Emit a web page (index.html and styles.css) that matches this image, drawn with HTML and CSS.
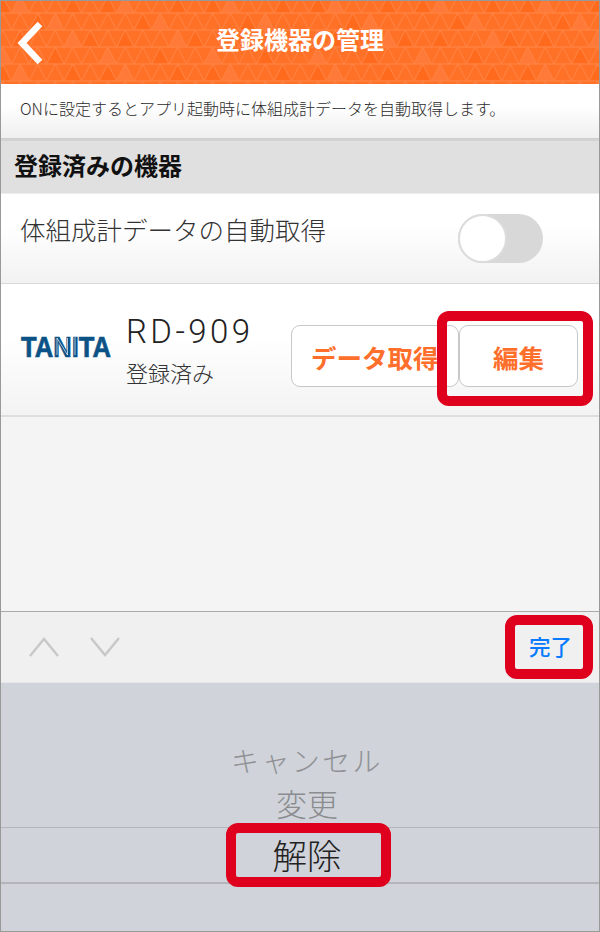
FILE: index.html
```html
<!DOCTYPE html>
<html lang="ja">
<head>
<meta charset="utf-8">
<title>登録機器の管理</title>
<link rel="stylesheet" href="styles.css">
</head>
<body>
<div class="screen">
  <header class="nav">
    <svg class="nav-pattern" width="598" height="83" aria-hidden="true">
      <defs>
        <pattern id="tri" width="105" height="68" patternUnits="userSpaceOnUse" x="-7" y="-5">
          <path d="M8.75 0 17.5 17H0Z M43.75 17 52.5 34H35Z M78.75 0 87.5 17H70Z M26.25 34 35 51H17.5Z M96.25 34 105 51H87.5Z M61.25 51 70 68H52.5Z" fill="#ff6a1c"/>
          <path d="M26.25 0 35 17H17.5Z M61.25 17 70 34H52.5Z M8.75 51 17.5 68H0Z M78.75 34 87.5 51H70Z" fill="#ff7a38"/>
          <path d="M0 17H105M0 34H105M0 51H105M0 0H105M0 68H105" stroke="#ff803f" stroke-width="1.5"/>
          <path d="M0 17 8.75 0 17.5 17 26.25 0 35 17 43.75 0 52.5 17 61.25 0 70 17 78.75 0 87.5 17 96.25 0 105 17" fill="none" stroke="#ff803f" stroke-width="1.2"/>
          <path d="M0 34 8.75 17 17.5 34 26.25 17 35 34 43.75 17 52.5 34 61.25 17 70 34 78.75 17 87.5 34 96.25 17 105 34" fill="none" stroke="#ff803f" stroke-width="1.2"/>
          <path d="M0 51 8.75 34 17.5 51 26.25 34 35 51 43.75 34 52.5 51 61.25 34 70 51 78.75 34 87.5 51 96.25 34 105 51" fill="none" stroke="#ff803f" stroke-width="1.2"/>
          <path d="M0 68 8.75 51 17.5 68 26.25 51 35 68 43.75 51 52.5 68 61.25 51 70 68 78.75 51 87.5 68 96.25 51 105 68" fill="none" stroke="#ff803f" stroke-width="1.2"/>
        </pattern>
      </defs>
      <rect width="598" height="83" fill="#ff7126"/>
      <rect width="598" height="83" fill="url(#tri)"/>
    </svg>
    <svg class="nav-back" width="28" height="44" viewBox="0 0 28 44" aria-hidden="true">
      <path d="M23 3 5 22 23 41" fill="none" stroke="#fff" stroke-width="6.5"/>
    </svg>
    <h1 class="nav-title">登録機器の管理</h1>
  </header>

  <p class="intro">ONに設定するとアプリ起動時に体組成計データを自動取得します。</p>

  <h2 class="section">登録済みの機器</h2>

  <div class="row-auto">
    <span class="row-auto-label">体組成計データの自動取得</span>
    <span class="toggle"><span class="toggle-knob"></span></span>
  </div>

  <div class="row-device">
    <svg class="logo" width="92" height="30" viewBox="0 0 92 30" role="img" aria-label="TANITA">
      <text class="logo-text" x="1" y="26" textLength="90" lengthAdjust="spacingAndGlyphs">TANITA</text>
      <path class="logo-inline" d="M37 24V7L47.5 24V7M55 6V24"/>
    </svg>
    <div class="device-info">
      <div class="device-name">RD-909</div>
      <div class="device-status">登録済み</div>
    </div>
    <div class="device-actions">
      <span class="btn btn-data">データ取得</span>
      <span class="btn btn-edit">編集</span>
    </div>
    <span class="mark mark-edit"></span>
  </div>

  <div class="blank"></div>

  <div class="toolbar">
    <div class="arrows">
      <svg width="32" height="22" viewBox="0 0 32 22" aria-hidden="true"><path d="M2 20 16 3 30 20" fill="none" stroke="#c8c8c8" stroke-width="2.4"/></svg>
      <svg width="32" height="22" viewBox="0 0 32 22" aria-hidden="true"><path d="M2 2 16 19 30 2" fill="none" stroke="#c8c8c8" stroke-width="2.4"/></svg>
    </div>
    <span class="done">完了</span>
    <span class="mark mark-done"></span>
  </div>

  <div class="picker">
    <div class="pick pick-far">キャンセル</div>
    <div class="pick pick-near">変更</div>
    <div class="pick pick-now">解除<span class="mark mark-now"></span></div>
  </div>
</div>
</body>
</html>
```
FILE: styles.css
```css
* { box-sizing: border-box; }
html, body { margin: 0; padding: 0; }
body { width: 600px; height: 932px; overflow: hidden; background: #fff; }
.screen {
  width: 600px; height: 932px;
  border: 1px solid #999;
  display: flex; flex-direction: column;
  font-family: "Noto Sans CJK JP", "Noto Sans", sans-serif;
  color: #333;
}
.nav {
  position: relative; flex: 0 0 83px;
  display: flex; align-items: center; justify-content: center;
}
.nav-pattern { position: absolute; left: 0; top: 0; }
.nav-back { position: absolute; left: 16px; top: 20px; }
.nav-title {
  position: relative; margin: 0 0 8px;
  font-size: 24px; font-weight: 700; color: #fff; line-height: 1;
}
.intro {
  margin: 0; flex: 0 0 55px;
  padding: 0 0 7px 19px;
  display: flex; align-items: center;
  font-size: 16px; font-weight: 300; color: #2b2b2b;
  background: linear-gradient(#fff 40%, #efefef);
  border-bottom: 1px solid #cfcfcf;
}
.section {
  margin: 0; flex: 0 0 55px;
  padding: 0 0 5px 13px;
  display: flex; align-items: center;
  font-size: 24px; font-weight: 700; color: #111;
  background: #e0e0e0;
  border-top: 2px solid #d2d2d2;
  border-bottom: 1px solid #eee;
}
.row-auto {
  flex: 0 0 90px;
  position: relative;
  padding: 0 56px 20px 19px;
  display: flex; align-items: center; justify-content: space-between;
  background: linear-gradient(#fff 35%, #f2f2f2);
  border-bottom: 1px solid #d9d9d9;
}
.row-auto-label { font-size: 25.5px; font-weight: 300; color: #333; }
.toggle {
  width: 85px; height: 49px; border-radius: 25px;
  background: #d8d8d8;
  position: relative; top: 10px;
  display: block;
}
.toggle-knob {
  display: block; width: 49px; height: 49px; border-radius: 50%;
  background: #fff; border: 2px solid #dcdcdc;
}
.row-device {
  flex: 0 0 133px;
  position: relative;
  padding: 0 20px 0 19px;
  display: flex; align-items: center;
  background: linear-gradient(#fff 40%, #f3f3f3);
  border-bottom: 2px solid #dedede;
}
.logo { flex: none; margin-top: -7px; overflow: visible; }
.logo-text {
  font-family: "Liberation Sans", sans-serif;
  font-size: 30px; font-weight: 700; fill: #0b5286;
  stroke: #0b5286; stroke-width: 0.7;
}
.logo-inline { fill: none; stroke: #fff; stroke-width: 0.9; opacity: 0.75; }
.device-info { margin-left: 14px; width: 165px; }
.device-name {
  font-family: "Roboto", sans-serif; font-weight: 300;
  font-size: 33px; letter-spacing: 3.4px; line-height: 40px; color: #222; margin-top: 2px;
}
.device-status { font-size: 22px; font-weight: 300; line-height: 34px; color: #333; margin-top: 3px; }
.device-actions { display: flex; margin-top: 13px; }
.btn {
  height: 62px; background: #fff;
  border: 1.5px solid #c8c8c8; border-radius: 9px;
  display: flex; align-items: center; justify-content: center;
  font-size: 25.5px; font-weight: 700; color: #ff6f2c;
  white-space: nowrap;
}
.btn-data { width: 168px; justify-content: flex-start; padding-left: 19px; }
.btn-edit { width: 119px; }
.mark {
  position: absolute; display: block;
  border: 10px solid #df001e; border-radius: 12px;
}
.mark-edit { left: 436px; top: 27px; width: 156px; height: 95px; }
.blank { flex: 1 1 auto; background: #f4f4f4; border-bottom: 1px solid #aaa; }
.toolbar {
  flex: 0 0 71px;
  position: relative;
  padding: 0 27px 0 27px;
  display: flex; align-items: center; justify-content: space-between;
  background: #f0f0f1;
  border-bottom: 1px solid #e6e7ea;
}
.arrows { display: flex; gap: 29px; }
.done { font-size: 21.5px; font-weight: 500; color: #0a7aff; margin-bottom: 3px; margin-right: 0; }
.mark-done { left: 504px; top: 3px; width: 88px; height: 64px; }
.picker {
  flex: 0 0 248px;
  display: flex; flex-direction: column; align-items: center;
  background: #d0d3da;
  padding-top: 52px;
  position: relative;
}
.pick { text-align: center; width: 100%; font-weight: 300; padding-left: 14px; }
.pick-far { font-size: 28px; letter-spacing: 2.4px; color: #8f9194; line-height: 50px; height: 44px; }
.pick-near { font-size: 31px; color: #8a8c8f; line-height: 48px; height: 48px; }
.pick-now {
  position: relative;
  font-size: 34.5px; color: #222; height: 57px; line-height: 52px;
  border-top: 1px solid #b3b5ba; border-bottom: 2px solid #b3b5ba;
}
.mark-now { left: 225px; top: -5px; width: 165px; height: 64px; }
```
